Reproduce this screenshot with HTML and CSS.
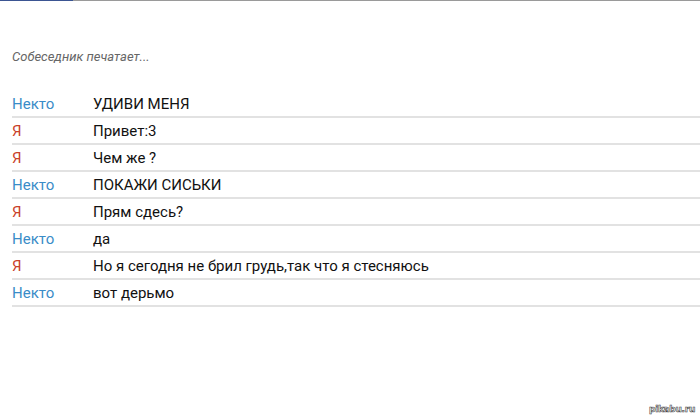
FILE: index.html
```html
<!DOCTYPE html>
<html>
<head>
<meta charset="utf-8">
<link rel="stylesheet" href="styles.css">
</head>
<body>
<div class="tabbar"><div class="tab-active"></div><div class="tab-rest"></div></div>
<div class="typing">Собеседник печатает...</div>
<div class="chat">
  <div class="row"><span class="who them">Некто</span><span class="msg">УДИВИ МЕНЯ</span></div>
  <div class="row"><span class="who me">Я</span><span class="msg">Привет:3</span></div>
  <div class="row"><span class="who me">Я</span><span class="msg">Чем же ?</span></div>
  <div class="row"><span class="who them">Некто</span><span class="msg">ПОКАЖИ СИСЬКИ</span></div>
  <div class="row"><span class="who me">Я</span><span class="msg">Прям сдесь?</span></div>
  <div class="row"><span class="who them">Некто</span><span class="msg">да</span></div>
  <div class="row"><span class="who me">Я</span><span class="msg">Но я сегодня не брил грудь,так что я стесняюсь</span></div>
  <div class="row"><span class="who them">Некто</span><span class="msg">вот дерьмо</span></div>
</div>
<div class="watermark">pikabu.ru</div>
</body>
</html>
```
FILE: styles.css
```css
html, body {
  margin: 0;
  padding: 0;
  background: #ffffff;
  width: 700px;
  height: 420px;
  overflow: hidden;
  font-family: Roboto, "Liberation Sans", sans-serif;
}
body {
  position: relative;
}
.tabbar {
  display: flex;
  height: 1px;
}
.tab-active {
  width: 73px;
  background: #3b5592;
}
.tab-rest {
  flex: 1;
  background: #9a9a9a;
}
.typing {
  margin: 48px 0 0 12px;
  font-size: 13px;
  font-style: italic;
  color: #666666;
  line-height: 16px;
}
.chat {
  margin: 26px 0 0 12px;
}
.row {
  display: flex;
  align-items: center;
  height: 25px;
  border-bottom: 2px solid #e2e2e2;
  font-size: 15px;
}
.who {
  width: 81px;
  flex: none;
}
.them {
  color: #3a8cc8;
}
.me {
  color: #c9412a;
}
.msg {
  color: #111111;
}
.watermark {
  position: absolute;
  right: 5px;
  bottom: 6px;
  font-family: "DejaVu Sans", sans-serif;
  font-size: 9px;
  font-weight: bold;
  color: #ffffff;
  -webkit-text-stroke: 0.6px #444;
  letter-spacing: -0.3px;
}
```
